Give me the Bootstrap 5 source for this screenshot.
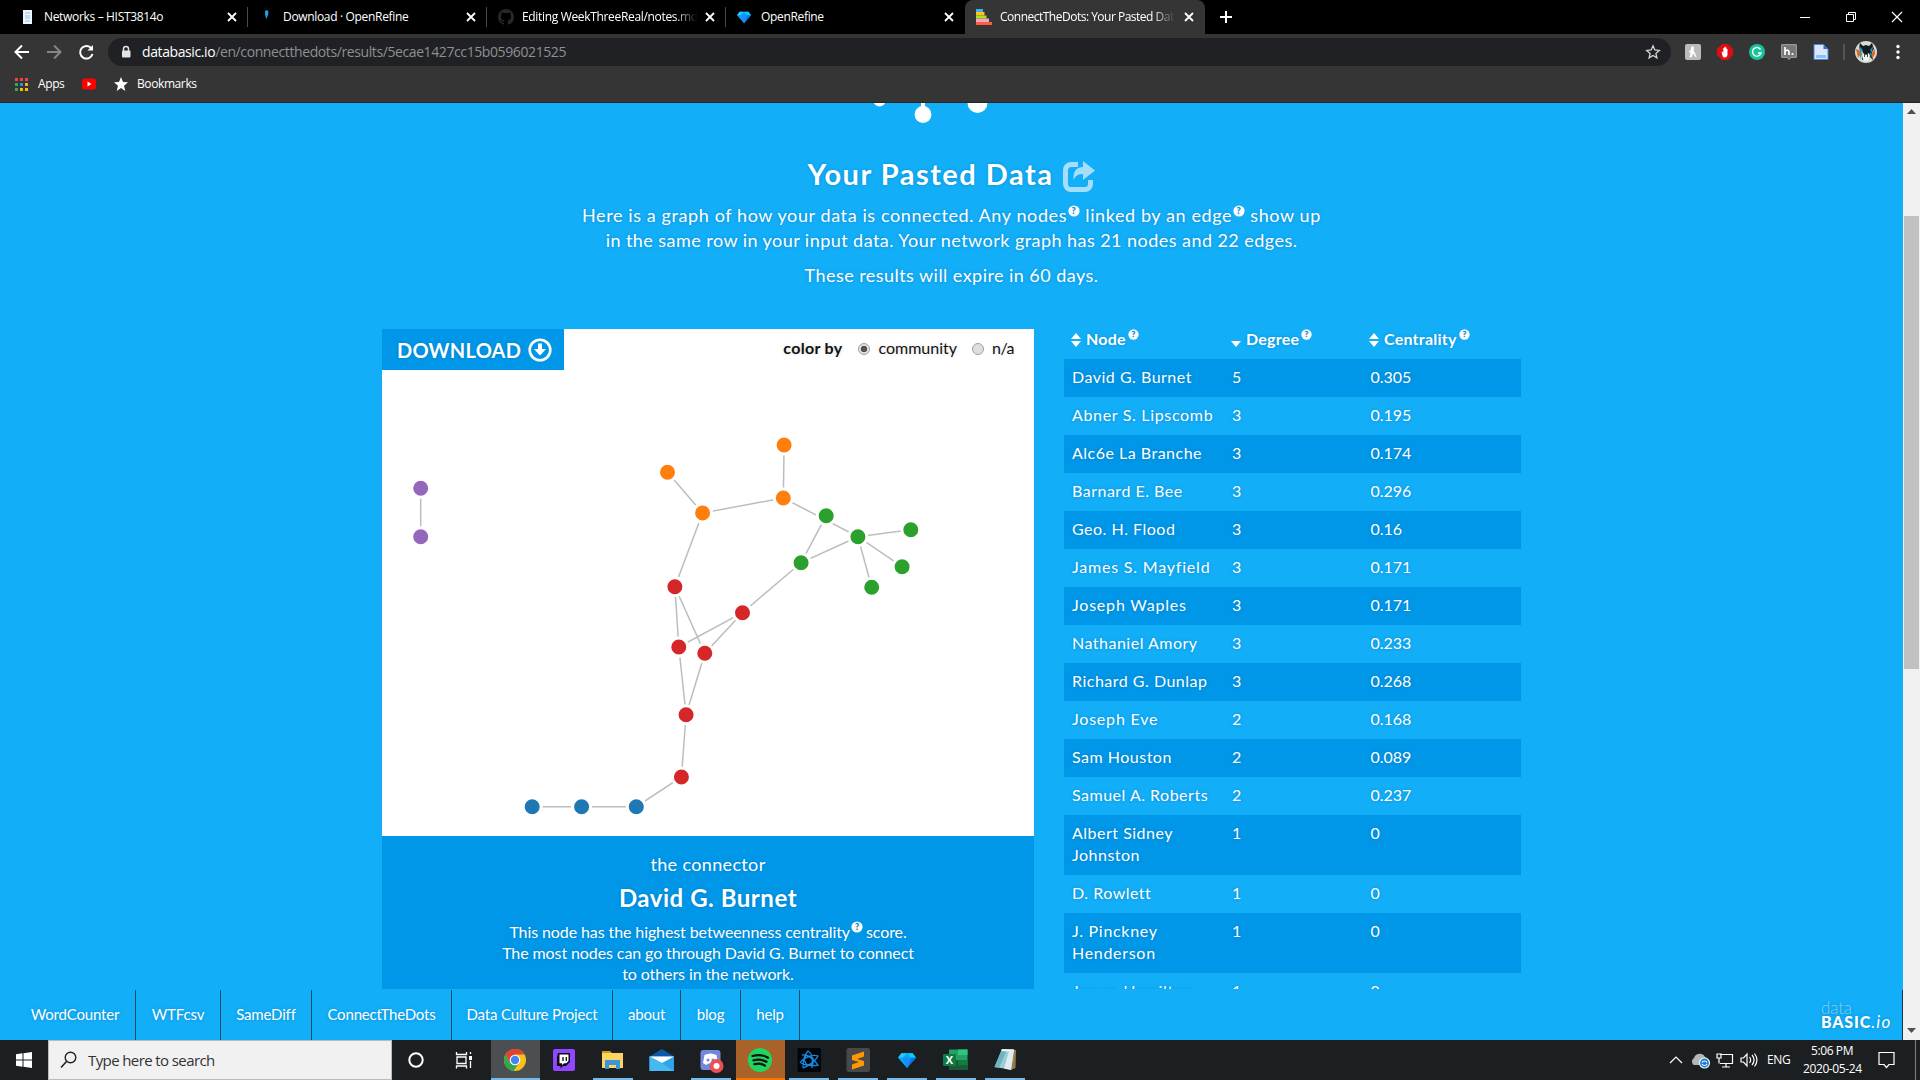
<!DOCTYPE html>
<html lang="en"><head><meta charset="utf-8"><title>ConnectTheDots: Your Pasted Data</title>
<link href="https://cdn.jsdelivr.net/npm/bootstrap@5.3.0/dist/css/bootstrap.min.css" rel="stylesheet">
<style>
html,body{height:100%;overflow:hidden}
body{width:1920px;height:1080px;font-family:"Open Sans","Noto Sans",sans-serif;font-size:12px;color:#fff;background:#12aef8}
svg{display:block;flex:none}
.tabstrip{height:34px;background:#000;padding-left:9px;letter-spacing:-.33px}
.tab{width:239px;height:34px;padding:0 8px 0 11px;position:relative}
.tab>svg:last-child{margin-left:auto}
.tab::after{content:"";position:absolute;right:0;top:7px;height:20px;width:1px;background:#4a4a4a}
.tab.plain::after,.tab.on::after{display:none}
.tab.on{width:240px;background:#353535;border-radius:8px 8px 0 0;letter-spacing:-.5px}
.tab .ttl{width:177px;margin-left:8px;white-space:nowrap;overflow:hidden;line-height:34px}
.tab .fade-end{-webkit-mask-image:linear-gradient(90deg,#000 86%,transparent 99%)}
.toolbar{height:36px;background:#353535}
.omni{width:1563px;height:28px;border-radius:14px;background:#202124;color:#8d9093;font-size:14px;letter-spacing:-.4px;margin-left:6px;padding:0 10px 0 12px}
.addr{margin-left:10px;line-height:20px;padding-bottom:1px}
.bookbar{height:33px;background:#353535;border-bottom:1px solid #252527;padding:0 0 4px 15px;letter-spacing:-.4px}
.view{height:937px}
.site{width:1903px;background:#12aef8;font-family:Lato,"Open Sans",sans-serif;text-shadow:0 0 3px rgba(0,70,130,.35)}
.scrolled{height:886px;overflow:hidden}
.hero{height:226px}
.hero .logo{height:51px}
.hero h1{font-size:29px;font-weight:700;line-height:40px;margin:0;gap:8px;letter-spacing:1.5px}
.hero p{font-size:18px;line-height:25px;margin:0 0 10px;letter-spacing:.45px}
.hero .intro{margin-top:9px}
.hero .l1{letter-spacing:.6px}
.q{display:inline-block;vertical-align:5px;margin:0 2px}
.hero .q{margin:0 0 0 1px}
.cols{width:1139px;margin-left:382px;gap:30px}
.graph{width:652px}
.canvas{height:507px;background:#fff;color:#111}
.canvas-bar{height:41px}
.dl{width:182px;height:41px;background:#0097e8;color:#fff;font-size:20px;font-weight:700;padding-left:15px;gap:7px;letter-spacing:.25px}
.colorby{font-size:16px;margin-right:20px;height:38px;text-shadow:0 0 4px rgba(0,0,0,.15)}
.colorby b{letter-spacing:.3px}
.colorby .na{letter-spacing:-.5px}
.rad{width:12px;height:12px;border-radius:50%;border:1px solid #a0a0a0;background:#dedede}
.rad.sel{background:radial-gradient(circle,#555 0 3px,#e4e4e4 3.6px)}
.connector{height:153px;background:#0097e8;padding-top:16px}
.connector .c1{font-size:18px;line-height:24px;letter-spacing:.35px}
.connector h2{font-size:24px;font-weight:700;line-height:30px;margin:7px 0 8px;letter-spacing:.53px}
.connector p{font-size:16px;line-height:21px;margin:0;letter-spacing:-.1px}
.connector .q{margin:0 -1px 0 1px}
.metrics{width:457px;font-size:16px;line-height:22px}
.metrics .r{padding:7px 8px 9px}
.metrics .r>div:nth-child(1){width:160px;padding-right:12px;letter-spacing:.5px;white-space:nowrap}
.metrics .r>div:nth-child(2){width:138.5px}
.metrics .r:nth-child(even){background:#0097e8}
.metrics .hd{height:30px;padding:0 0 0 7px;font-weight:700;margin-top:-1px;margin-bottom:1px;letter-spacing:.25px}
.metrics .hd>div{white-space:nowrap}
.foot{height:51px;font-size:15px;padding-top:1px;letter-spacing:-.17px}
.foot nav{display:grid;grid-template-columns:136px 85px 91px 140px 161px 68px 60px 59px}
.foot nav a{color:#fff;text-decoration:none;text-align:center;line-height:48px;border-right:1px solid #134a68;height:50px}
.foot nav a:first-child{padding-left:15px}
.brand-mark{width:82px;border-right:1px solid #234;padding-top:10px}
.brand-mark .b1{font-weight:300;font-size:17px;line-height:15px;color:#7fd2fb}
.brand-mark .b2{font-weight:900;font-size:16px;line-height:13px;letter-spacing:.85px}
.brand-mark em{font-size:17px;letter-spacing:1.2px}
.sbar{width:17px;background:#f1f1f1;padding-top:113px;position:relative}
.thumb{height:453px;background:#c1c1c1;margin:0 1px}
.sbar svg{position:absolute;left:4px}
.taskbar{height:40px;background:#1c1f21}
.find{width:344px;height:40px;background:#f1f1f1;border:1px solid #bbb;color:#333;font-size:15px;letter-spacing:-.6px;padding-left:11px;gap:11px}
.app{width:49px;height:40px;position:relative}
.app.run::after{content:"";position:absolute;left:4px;width:40px;bottom:0;height:2px;background:#76b9ed}
.app.act{background:#4c4f51}.app.act::after{left:0;width:49px}
.app.alert-on{background:#a8622a}.app.alert-on::after{background:#ff7200;left:0;width:49px}
.clock{line-height:18px;width:58px;margin-top:-1px;white-space:nowrap;letter-spacing:-.4px}
</style></head><body class="d-flex flex-column">
<svg width="0" height="0" class="position-absolute"><defs>
<symbol id="x" viewBox="0 0 16 16"><path d="M4 4l8 8M12 4l-8 8" stroke="#fff" stroke-width="1.8" fill="none"/></symbol>
<symbol id="gem" viewBox="0 0 16 16"><path d="M3 2h10l3 4-8 9L0 6z" fill="#0aa5f5"/><path d="M3 2l5 0-4 4H0z" fill="#25c9ff"/><path d="M8 2h5l3 4h-4z" fill="#00d0ff"/><path d="M4 6h8l-4 9z" fill="#1b8cf5"/><path d="M12 6h4l-8 9z" fill="#0a6fe8"/></symbol>
<symbol id="qm" viewBox="0 0 12 12"><circle cx="6" cy="6" r="5.6" fill="#fff"/><text x="6" y="9.2" text-anchor="middle" font-family="Lato" font-weight="900" font-size="9" fill="#0a86cf">?</text></symbol>
<symbol id="sort" viewBox="0 0 10 14"><path d="M0 6l5-6 5 6zM0 8h10l-5 6z" fill="#fff"/></symbol>
</defs></svg>
<div class="tabstrip d-flex align-items-center">
<div class="tab d-flex align-items-center"><svg width="16" height="16"><path d="M3 1h9v14H3z" fill="#eef6fd"/><path d="M5 4h5M5 7h5M5 9h5M5 12h5" stroke="#8fc3ee"/></svg><span class="ttl">Networks – HIST3814o</span><svg width="16" height="16"><use href="#x"/></svg></div>
<div class="tab d-flex align-items-center"><svg width="16" height="16"><path d="M6 2c3-2 4 0 3 4L7.500 10C6 7 6 5 6 2z" fill="#16a6e8"/></svg><span class="ttl">Download · OpenRefine</span><svg width="16" height="16"><use href="#x"/></svg></div>
<div class="tab d-flex align-items-center"><svg width="16" height="16" viewBox="0 0 16 16"><path fill="#24292e" d="M8 0C3.580 0 0 3.580 0 8c0 3.540 2.290 6.530 5.470 7.590.4.070.55-.17.55-.38v-1.490c-2.010.37-2.530-.49-2.690-.94-.09-.23-.48-.94-.82-1.130-.28-.15-.68-.52-.01-.53.63-.01 1.080.58 1.230.82.72 1.210 1.870.87 2.330.66.07-.52.28-.87.51-1.070-1.780-.2-3.640-.89-3.640-3.950 0-.87.31-1.590.82-2.150-.08-.2-.36-1.020.08-2.120 0 0 .67-.21 2.200.82a7.600 7.600 0 014 0c1.530-1.040 2.200-.82 2.200-.82.44 1.100.16 1.920.08 2.120.51.56.82 1.270.82 2.150 0 3.070-1.870 3.750-3.650 3.950.29.25.54.73.54 1.480v2.200c0 .21.15.46.55.38A8 8 0 0016 8c0-4.420-3.580-8-8-8z"/></svg><span class="ttl fade-end">Editing WeekThreeReal/notes.md</span><svg width="16" height="16"><use href="#x"/></svg></div>
<div class="tab plain d-flex align-items-center"><svg width="14" height="14" class="me-1"><use href="#gem"/></svg><span class="ttl" style="margin-left:6px">OpenRefine</span><svg width="16" height="16"><use href="#x"/></svg></div>
<div class="tab on d-flex align-items-center"><svg width="16" height="16"><path d="M0 0h7v3H0z" fill="#35b4f0"/><path d="M0 3h8.500v3.500H0z" fill="#ffc21e"/><path d="M0 6.500h10.500v3H0z" fill="#a5e51e"/><path d="M0 9.500h13v3.500H0z" fill="#f8a5b5"/><path d="M0 13h16v3H0z" fill="#fc5d45"/></svg><span class="ttl fade-end">ConnectTheDots: Your Pasted Data</span><svg width="16" height="16"><use href="#x"/></svg></div>
<svg width="14" height="14" style="margin-left:14px"><path d="M7 1v12M1 7h12" stroke="#fff" stroke-width="2"/></svg>
<div class="d-flex ms-auto align-items-center" style="gap:34px;padding-right:17px;height:28px"><svg width="12" height="12"><path d="M1 6.500h10" stroke="#fff"/></svg><svg width="12" height="12"><path d="M1.500 3.500h7v7h-7zM3.500 3.500v-2h7v7h-2" stroke="#fff" fill="none"/></svg><svg width="12" height="12"><path d="M1 1l10 10M11 1L1 11" stroke="#fff" stroke-width="1.200"/></svg></div>
</div>
<div class="toolbar d-flex align-items-center">
<svg width="102" height="20" fill="none" stroke="#fff" stroke-width="2"><path d="M29 10H16M22 3.500L15.500 10l6.500 6.500"/><path d="M47 10h13M54 3.500l6.500 6.500-6.500 6.500" stroke="#858585"/><path d="M91.500 6.500A6.300 6.300 0 1 0 92.500 12"/><path d="M93 3v5.500h-5.500z" fill="#fff" stroke="none"/></svg>
<div class="omni d-flex align-items-center"><svg width="12" height="14"><path d="M3.500 6V4a2.500 2.500 0 0 1 5 0v2" stroke="#e2e3e5" stroke-width="1.500" fill="none"/><rect x="2" y="5.500" width="8.500" height="7" rx="1" fill="#e2e3e5"/></svg><span class="addr"><span class="text-white">databasic.io</span>/en/connectthedots/results/5ecae1427cc15b0596021525</span>
<svg class="ms-auto" width="16" height="16"><path d="M8 1.800l1.800 4.200 4.500.4-3.400 3 1 4.400L8 11.500l-3.900 2.300 1-4.400-3.400-3 4.500-.4z" fill="none" stroke="#d5d6d8" stroke-width="1.300"/></svg></div>
<div class="d-flex align-items-center flex-fill" style="padding-left:14px;gap:16px">
<svg width="16" height="16"><rect width="16" height="16" rx="2" fill="#bbb"/><path d="M5 13c2-3 4-9 2.800-10S6 8 6 13c1-4 3-5 3.500-4s-.5 3 1.800 3.500M4 7.500h5" stroke="#fff" stroke-width="1.500" fill="none"/></svg>
<svg width="16" height="16"><path d="M5 0h6l5 5v6l-5 5H5l-5-5V5z" fill="#e30b12"/><path d="M4.500 8l1-.5.8 1.500V4h1v3V2.700h1.200V7V3.500h1V7.500V5h1v5c0 2.500-1 3.500-3 3.500S5.500 11 4.500 8z" fill="#fff"/></svg>
<svg width="16" height="16"><circle cx="8" cy="8" r="8" fill="#15c39a"/><path d="M11.500 5.500A4.300 4.300 0 1 0 12 9H9" stroke="#fff" stroke-width="1.400" fill="none"/></svg>
<svg width="16" height="16"><path d="M.7.700h14.600v12.600H10L8 15.500l-2-2.200H.7z" fill="#777" stroke="#aaa"/><path d="M4 3v8M4 7.500c2-2 4-1.500 4 .5v3" stroke="#fff" stroke-width="1.700" fill="none"/><circle cx="11.500" cy="10" r="1.100" fill="#fff"/></svg>
<svg width="16" height="16"><path d="M1 .500h9.500L15 5v10.500H1z" fill="#d9e8fc" stroke="#4585d8"/><path d="M10.500.5V5H15z" fill="#2f6fd0"/><path d="M3 11h10v3H3z" fill="#8ec0f5"/></svg>
<svg width="2" height="20" style="margin:0 -2px"><path d="M1 2v16" stroke="#777"/></svg>
<svg width="22" height="22" viewBox="0 0 22 22" style="margin-left:-4px"><circle cx="11" cy="11" r="11" fill="#d9dad2"/><path d="M5 2l3 3 3-1 3 1 3-3 2 6-2 3 1 8-3-3-4 1-4 2 1-8-4-4z" fill="#141a22"/><path d="M1 8l3 1 2 3-3 5zM20 8l-3 4v6l3-5z" fill="#e0662c"/><path d="M4 5l4 4-3 3zM18 5l-3 4 2 3z" fill="#2b8fb5"/><path d="M4 13l3-2-1 7zM17 13l-2-2 1 7z" fill="#3d9a72"/><path d="M8 12l3 2 3-2 1 3-2 5h-4l-2-5z" fill="#f4f4ee"/><path d="M9 13h1v3H9zM12 13h1v3h-1z" fill="#2a4d66"/></svg>
<svg width="6" height="18" style="margin-left:2px"><g fill="#fff"><circle cx="3" cy="3.500" r="1.700"/><circle cx="3" cy="9" r="1.700"/><circle cx="3" cy="14.500" r="1.700"/></g></svg></div>
</div>
<div class="bookbar d-flex align-items-center">
<svg width="13" height="14"><path d="M0 1h3v3H0zM5 1h3v3H5zM10 1h3v3h-3z" fill="#f4433a"/><path d="M0 6h3v3H0z" fill="#34a853"/><path d="M5 6h3v3H5z" fill="#2a8cf5"/><path d="M10 6h3v3h-3z" fill="#fbae1c"/><path d="M0 11h3v3H0z" fill="#34a853"/><path d="M5 11h3v3H5zM10 11h3v3h-3z" fill="#fbbc05"/></svg><span style="margin-left:10px;width:44px">Apps</span><svg width="14" height="12"><rect width="14" height="11" y=".5" rx="2.500" fill="#f00"/><path d="M5.500 3.500v5L9.500 6z" fill="#fff"/></svg><svg width="14" height="14" style="margin:0 9px 0 18px"><path d="M7 0l2 5 5 .3-4 3.400L11.300 14 7 11l-4.300 3L4 8.700 0 5.300 5 5z" fill="#fff"/></svg><span>Bookmarks</span>
</div>
<div class="view d-flex">
<div class="site">
<div class="scrolled">
<header class="hero text-center">
<svg class="logo" width="1903" height="51" fill="#fff"><circle cx="879.500" cy="-2.500" r="6"/><path d="M921 0h4v6h-4z"/><circle cx="923" cy="11.500" r="8.400"/><circle cx="977.500" cy="0" r="10"/></svg>
<h1 class="d-flex justify-content-center align-items-center"><span>Your Pasted Data</span><svg width="34" height="34" viewBox="0 0 34 34" style="margin-top:5px"><path d="M16 4.500H9A5.500 5.500 0 0 0 3.500 10v14A5.500 5.500 0 0 0 9 29.500h14A5.500 5.500 0 0 0 28.500 24v-4" fill="none" stroke="#a5defc" stroke-width="5"/><path d="M21 1l12 9.500L21 20v-6c-6 0-8 3-9.500 6C11 12 14 7 21 7z" fill="#a5defc"/></svg></h1>
<p class="intro"><span class="l1">Here is a graph of how your data is connected. Any nodes<svg class="q" width="12" height="12"><use href="#qm"/></svg> linked by an edge<svg class="q" width="12" height="12"><use href="#qm"/></svg> show up</span><br>in the same row in your input data. Your network graph has 21 nodes and 22 edges.</p>
<p>These results will expire in 60 days.</p>
</header>
<div class="cols d-flex">
<section class="graph">
<div class="canvas">
<div class="canvas-bar d-flex justify-content-between"><div class="dl d-flex align-items-center"><span>DOWNLOAD</span><svg width="24" height="24"><circle cx="12" cy="12" r="10.300" fill="none" stroke="#fff" stroke-width="2.600"/><path d="M10 5.500h4V11h4l-6 6.500L6 11h4z" fill="#fff"/></svg></div>
<div class="colorby d-flex align-items-center"><b>color by</b><i class="rad sel" style="margin:2px 8px 0 16px"></i><span>community</span><i class="rad" style="margin:2px 8px 0 15px"></i><span class="na">n/a</span></div></div>
<svg width="652" height="466" viewBox="0 41 652 466"><g stroke="#bdbdbd" stroke-width="1.500">
<path fill="none" d="M38.700 159.300V207.700M402.100 116L401.300 169L320.600 184L285.500 143.300M401.300 169L475.900 207.700L528.800 200.700M475.900 207.700L520.100 237.700M475.900 207.700L489.700 258.300M475.900 207.700L419.100 233.700L444.200 186.700M419.100 233.700L360.500 283.700L296.800 318L292.900 257.700L320.600 184M360.500 283.700L322.800 324.300L292.900 257.700M296.800 318L304.100 385.700L322.800 324.300M304.100 385.700L299.400 448L254.300 477.700H150.200"/></g>
<g stroke="#fff" stroke-width="3"><g fill="#9467bd"><circle cx="38.700" cy="159.300" r="9"/><circle cx="38.700" cy="207.700" r="9"/></g>
<g fill="#ff7f0e"><circle cx="402.100" cy="116" r="9"/><circle cx="285.500" cy="143.300" r="9"/><circle cx="401.300" cy="169" r="9"/><circle cx="320.600" cy="184" r="9"/></g>
<g fill="#2ca02c"><circle cx="444.200" cy="186.700" r="9"/><circle cx="475.900" cy="207.700" r="9"/><circle cx="528.800" cy="200.700" r="9"/><circle cx="520.100" cy="237.700" r="9"/><circle cx="489.700" cy="258.300" r="9"/><circle cx="419.100" cy="233.700" r="9"/></g>
<g fill="#d62728"><circle cx="292.900" cy="257.700" r="9"/><circle cx="360.500" cy="283.700" r="9"/><circle cx="296.800" cy="318" r="9"/><circle cx="322.800" cy="324.300" r="9"/><circle cx="304.100" cy="385.700" r="9"/><circle cx="299.400" cy="448" r="9"/></g>
<g fill="#1f77b4"><circle cx="150.200" cy="477.700" r="9"/><circle cx="199.600" cy="477.700" r="9"/><circle cx="254.300" cy="477.700" r="9"/></g></g></svg>
</div>
<div class="connector text-center"><div class="c1">the connector</div><h2>David G. Burnet</h2><p>This node has the highest betweenness centrality<svg class="q" width="12" height="12"><use href="#qm"/></svg> score.<br>The most nodes can go through David G. Burnet to connect<br>to others in the network.</p></div>
</section>
<section class="metrics">
<div class="hd d-flex"><div style="width:160px"><svg class="d-inline-block" width="10" height="14" style="vertical-align:-2px;margin-right:5px"><use href="#sort"/></svg><span>Node</span><svg class="q" width="11" height="11"><use href="#qm"/></svg></div><div style="width:138px"><svg class="d-inline-block" width="10" height="14" style="vertical-align:-2px;margin-right:5px"><path d="M0 8h10l-5 6z" fill="#fff"/></svg><span>Degree</span><svg class="q" width="11" height="11"><use href="#qm"/></svg></div><div><svg class="d-inline-block" width="10" height="14" style="vertical-align:-2px;margin-right:5px"><use href="#sort"/></svg><span>Centrality</span><svg class="q" width="11" height="11"><use href="#qm"/></svg></div></div>
<div class="r d-flex"><div>David G. Burnet</div><div>5</div><div>0.305</div></div>
<div class="r d-flex"><div style="letter-spacing:.67px">Abner S. Lipscomb</div><div>3</div><div>0.195</div></div>
<div class="r d-flex"><div>Alc6e La Branche</div><div>3</div><div>0.174</div></div>
<div class="r d-flex"><div>Barnard E. Bee</div><div>3</div><div>0.296</div></div>
<div class="r d-flex"><div>Geo. H. Flood</div><div>3</div><div>0.16</div></div>
<div class="r d-flex"><div style="letter-spacing:.8px">James S. Mayfield</div><div>3</div><div>0.171</div></div>
<div class="r d-flex"><div style="letter-spacing:.8px">Joseph Waples</div><div>3</div><div>0.171</div></div>
<div class="r d-flex"><div>Nathaniel Amory</div><div>3</div><div>0.233</div></div>
<div class="r d-flex"><div>Richard G. Dunlap</div><div>3</div><div>0.268</div></div>
<div class="r d-flex"><div style="letter-spacing:.8px">Joseph Eve</div><div>2</div><div>0.168</div></div>
<div class="r d-flex"><div>Sam Houston</div><div>2</div><div>0.089</div></div>
<div class="r d-flex"><div>Samuel A. Roberts</div><div>2</div><div>0.237</div></div>
<div class="r d-flex"><div>Albert Sidney<br>Johnston</div><div>1</div><div>0</div></div>
<div class="r d-flex"><div>D. Rowlett</div><div>1</div><div>0</div></div>
<div class="r d-flex"><div style="letter-spacing:.7px">J. Pinckney<br>Henderson</div><div>1</div><div>0</div></div>
<div class="r d-flex"><div style="letter-spacing:.7px">James Hamilton</div><div>1</div><div>0</div></div>
</section>
</div></div>
<footer class="foot d-flex justify-content-between"><nav><a>WordCounter</a><a>WTFcsv</a><a>SameDiff</a><a>ConnectTheDots</a><a>Data Culture Project</a><a>about</a><a>blog</a><a>help</a></nav>
<div class="brand-mark"><div class="b1">data</div><div class="b2">BASIC<em class="fw-normal">.io</em></div></div></footer>
</div>
<div class="sbar"><svg width="9" height="6" style="top:6px"><path d="M0 5l4.500-5L9 5z" fill="#505050"/></svg><div class="thumb"></div><svg width="9" height="6" style="bottom:6px"><path d="M0 0h9L4.500 5z" fill="#505050"/></svg></div>
</div>
<div class="taskbar d-flex align-items-center">
<svg width="48" height="40"><path d="M16 14.200l6.500-.9V19.500H16zM23.500 13.200l8.500-1.200v7.500h-8.500zM16 20.500h6.500v6.200l-6.500-.9zM23.500 20.500H32V28l-8.500-1.200z" fill="#fff"/></svg>
<div class="find d-flex align-items-center"><svg width="17" height="18"><circle cx="10.500" cy="6.500" r="5.300" fill="none" stroke="#222" stroke-width="1.400"/><path d="M6.500 10.500L1 16.500" stroke="#222" stroke-width="1.600"/></svg><span>Type here to search</span></div>
<div class="app"><svg width="49" height="40"><circle cx="24" cy="20" r="6.700" fill="none" stroke="#fff" stroke-width="2"/></svg></div>
<div class="app"><svg width="49" height="40" fill="none" stroke="#fff" stroke-width="1.300"><path d="M15.500 12v2.500h10V12M16 17h9v6.500h-9zM15.500 28.500V26h10v2.500M29.500 12v2M29.500 21v7"/><path d="M28 16h3v4h-3z" fill="#fff" stroke="none"/></svg></div>
<div class="app run act" style="margin-left:1px"><svg width="49" height="40"><circle cx="24" cy="20" r="11" fill="#fbc116"/><path d="M14.500 14.500A11 11 0 0 1 33.500 14.500H24L19 23z" fill="#e34133"/><path d="M14.500 14.500A11 11 0 0 0 22.500 31L28.500 22.500 24 25.500 19 23z" fill="#2da94f"/><circle cx="24" cy="20" r="5.300" fill="#fff"/><circle cx="24" cy="20" r="4.200" fill="#4285f4"/></svg></div>
<div class="app"><svg width="49" height="40"><rect x="13" y="9" width="22" height="22" rx="2" fill="#9146ff"/><path d="M18 13h12v9l-4 4h-3l-2.500 2.500V26H17v-9z" fill="#0c0c12"/><path d="M19.500 14.500h9v6.500l-2.300 2.300h-2L22 25v-1.700h-2.500z" fill="#fff"/><path d="M23 17v4M26.300 17v4" stroke="#0c0c12" stroke-width="1.300"/></svg></div>
<div class="app run"><svg width="49" height="40"><path d="M13 11h8l2 2h-8v14h-2z" fill="#d99a13"/><path d="M13 13h21v15H13z" fill="#fcd462"/><path d="M16 29v-9h15v9h-4v-4h-7v4z" fill="#3a95dc"/></svg></div>
<div class="app"><svg width="49" height="40"><path d="M11.500 16.500L24 9l12 7.500v3H11.500z" fill="#0a5aa8"/><path d="M11.500 16.500h24.500v14.500H11.500z" fill="#2fa4ea"/><path d="M11.500 16.500h24.500L24 23z" fill="#fff"/><path d="M11.500 16.500l12 6.500L36 31H11.500z" fill="#47b8f2"/></svg></div>
<div class="app run"><svg width="49" height="40"><rect x="13.500" y="10" width="20" height="20" rx="3" fill="#7289da"/><path d="M17.500 15c4-2 8-2 12 0l1.500 8-3.500 2-1.500-1.500h-5L19.500 25l-3.500-2z" fill="#fff"/><circle cx="21" cy="20" r="1.500" fill="#7289da"/><circle cx="26" cy="20" r="1.500" fill="#7289da"/><circle cx="29.500" cy="26" r="7" fill="#ee4f55"/><circle cx="29.500" cy="26" r="3" fill="#fff"/></svg></div>
<div class="app run alert-on"><svg width="49" height="40"><circle cx="24" cy="20" r="12" fill="#1ed760"/><path d="M16.500 16c5-1.500 11-1 15.500 1.700M17.500 20.300c4.500-1.200 9-.7 13 1.500M18.500 24.200c3.500-.9 7.500-.5 10.500 1.400" stroke="#111" stroke-width="2.300" fill="none" stroke-linecap="round"/></svg></div>
<div class="app run"><svg width="49" height="40"><rect x="12.500" y="8" width="23.500" height="24" rx="1.500" fill="#020509"/><path d="M17 15c5-1 12 4 16 10-4 1-12 1-17-2M18 28c0-7 2-14 5-17 4 2 5 9 4 17M15 23c3-5 12-9 18-7-2 4-9 10-15 12M21 15l7 3v6l-6 1-3-5z" fill="none" stroke="#138be0" stroke-width="1.300"/></svg></div>
<div class="app run"><svg width="49" height="40"><rect x="12.500" y="8" width="23.500" height="24" rx="2" fill="#484848"/><path d="M18 15.500l12-4v5l-7 2.500 7 2v4.500l-12 4v-5l7-2.500-7-2z" fill="#ff9800"/></svg></div>
<div class="app run"><svg width="49" height="40"><svg x="14" y="11" width="20" height="18"><use href="#gem"/></svg></svg></div>
<div class="app run"><svg width="49" height="40"><path d="M17 9.500h18.500v20.500H17z" fill="#21a366"/><path d="M26 9.500h9.500v5.500H26z" fill="#33c481"/><path d="M17 20h18.500v10H17z" fill="#185c37"/><path d="M26 20h9.500v5H26z" fill="#107c41"/><rect x="11" y="14" width="13" height="12" rx="1" fill="#107c41"/><text x="17.500" y="24" font-family="Open Sans" font-weight="700" font-size="11" text-anchor="middle" fill="#fff">X</text></svg></div>
<div class="app run"><svg width="49" height="40"><path d="M29 9l6 1-.5 18-4.500 2z" fill="#9a7a4a"/><path d="M21 9l12 .5-3 20.500-7-1.500-9.500-1.500z" fill="#9fcbd5"/><path d="M21 9l5 .3-8 18.700-4.500-1z" fill="#6fb2c0"/><path d="M21 9l12 .5-.4 2.500-12.400-1z" fill="#eef5f6"/><path d="M28 11l5-.5-3 19.500-7-1.500z" fill="#dcecef"/></svg></div>
<div class="ms-auto d-flex align-items-center">
<svg width="96" height="40" fill="none" stroke="#fff" stroke-width="1.200"><path d="M5 23l6-6 6 6"/><path d="M29 25a4 4 0 0 1 0-7 6 6 0 0 1 11-1 4.500 4.500 0 0 1 3 6l-3 2z" fill="#b5b5b5" stroke="none"/><circle cx="39.500" cy="23" r="5" fill="#1c7cd6" stroke="#e8f2fb"/><path d="M37 22.500c1-2 4-2 5 0M42 24c-1 2-4 2-5 0"/><path d="M55 14.500h12.500v9H55M52 14h4v4h-4zM54 18v5.500M61 23.500V27M57 27h8"/><path d="M76 18h2.500l3.500-4v12l-3.500-4H76zM84.500 17c1.500 2 1.500 4 0 6M87 15c2.500 3 2.500 7 0 10M89.500 13.500c3 4 3 9 0 13"/></svg>
<span style="margin-left:6px;width:36px;letter-spacing:-.4px">ENG</span>
<div class="clock text-center">5:06 PM<br>2020-05-24</div>
<svg width="59" height="40" fill="none" stroke="#fff" stroke-width="1.200"><path d="M18 12.500h15v12h-5l-2.500 3-2.500-3h-5z"/><path d="M54.500 0v40" stroke="#777"/></svg>
</div></div>
<script src="https://cdn.jsdelivr.net/npm/bootstrap@5.3.0/dist/js/bootstrap.bundle.min.js"></script>
</body></html>
